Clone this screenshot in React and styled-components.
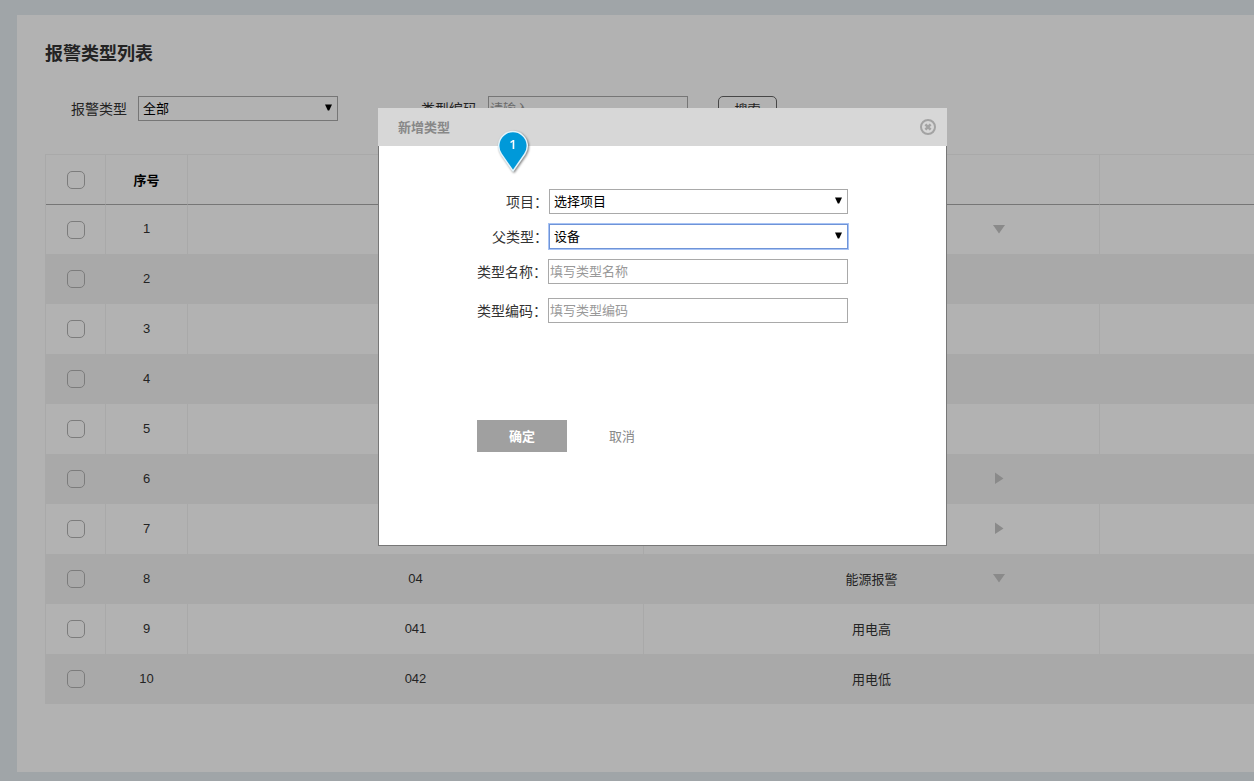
import React, { useState } from "react";
import styled, { createGlobalStyle } from "styled-components";

const palette = {
  page: `#e5ecf1`,
  line: `#f2f2f2`,
  stripe: `#f3f3f3`,
  control: `#a9a9a9`,
  text: `#333`,
  muted: `#888`,
  focus: `#6f94d8`,
  pin: `#0099d9`
};

const GlobalStyle = createGlobalStyle`
  * {
    box-sizing: border-box;
  }
  body {
    margin: 0;
    background: ${palette.page};
    color: ${palette.text};
    font-family: "Liberation Sans", "Noto Sans CJK SC", sans-serif;
    font-size: 13px;
  }
  button, input, select {
    font: inherit;
    margin: 0;
  }
`;

const Page = styled.div`
  padding: 15px 0 9px 17px;
  overflow: hidden;
`;

const Panel = styled.main`
  background: #fff;
  padding: 24px 0 68px 28px;
`;

const Title = styled.h1`
  margin: 0 0 27px;
  font-size: 18px;
  line-height: 30px;
`;

const Filters = styled.form`
  display: flex;
  align-items: flex-start;
  height: 26px;
  margin-bottom: 32px;
  padding-left: 26px;
`;

const FilterLabel = styled.label`
  margin-right: 11px;
  font-size: 14px;
  line-height: 27px;
`;

const SelectBox = styled.div`
  display: grid;
  align-items: center;
  width: ${props => props.$width}px;

  > * {
    grid-area: 1 / 1;
  }
  > svg {
    justify-self: end;
    margin-right: 6px;
    margin-bottom: 2px;
    pointer-events: none;
  }
`;

const SelectInput = styled.select`
  appearance: none;
  width: 100%;
  height: 25px;
  padding: 0 20px 0 4px;
  border: 1px solid ${props => (props.$active ? palette.focus : palette.control)};
  border-radius: 0;
  outline: none;
  background: #fff;
  color: #000;
  box-shadow: ${props => (props.$active ? `0 0 0 1px #a9c4f5` : `none`)};
`;

const TextInput = styled.input`
  width: ${props => props.$width}px;
  height: 25px;
  padding: 0 1px;
  border: 1px solid ${palette.control};
  border-radius: 0;
  outline: none;
  background: #fff;

  &::placeholder {
    color: #999;
    opacity: 1;
  }
`;

const FilterGroup = styled.div`
  display: flex;
  align-items: flex-start;
  margin-right: ${props => props.$gap}px;
`;

const SearchButton = styled.button`
  width: 59px;
  height: 26px;
  padding: 0 0 2px;
  border: 1px solid #666;
  border-radius: 5px;
  background: #fff;
  color: ${palette.text};
`;

const Table = styled.table`
  width: 1510px;
  table-layout: fixed;
  border-collapse: separate;
  border-spacing: 0;
  border-left: 1px solid ${palette.line};

  th, td {
    height: 50px;
    padding: 0;
    text-align: center;
    border-right: 1px solid ${palette.line};
  }
  th {
    border-top: 1px solid ${palette.line};
    color: #000;
  }
  td + td {
    padding-bottom: 2px;
  }
  tbody tr:nth-child(even) {
    background: ${palette.stripe};
  }
  tbody tr:first-child td {
    border-top: 1px solid ${palette.control};
  }
`;

const Check = styled.input`
  appearance: none;
  display: block;
  width: 18px;
  height: 18px;
  margin: 0 auto;
  border: 1px solid #b2b2b2;
  border-radius: 5px;

  &:checked {
    background: #b2b2b2;
  }
`;

const NameCell = styled.div`
  display: grid;
  grid-template-columns: 1fr 242px 1fr;
  align-items: center;

  > span {
    grid-column: 2;
  }
`;

const Toggle = styled.button`
  grid-column: 3;
  justify-self: start;
  display: flex;
  padding: 0;
  border: 0;
  background: none;
`;

const Overlay = styled.div`
  position: fixed;
  inset: 0;
  display: flex;
  justify-content: center;
  align-items: flex-start;
  padding: 108px 0 0 71px;
  background: rgba(0, 0, 0, 0.3);
`;

const Dialog = styled.section`
  position: relative;
  width: 569px;
`;

const DialogHeader = styled.header`
  display: flex;
  justify-content: space-between;
  align-items: center;
  height: 38px;
  padding: 0 10px 0 20px;
  background: #d7d7d7;
`;

const DialogTitle = styled.h2`
  margin: 0;
  padding-bottom: 2px;
  color: ${palette.muted};
  font-size: 13px;
  font-weight: 700;
`;

const CloseButton = styled.button`
  display: flex;
  padding: 0;
  border: 0;
  background: none;
`;

const DialogForm = styled.form`
  padding: 43px 98px 93px;
  border: 1px solid #777;
  border-top: 0;
  background: #fff;
`;

const Field = styled.div`
  display: flex;
  justify-content: flex-end;
  align-items: flex-start;
  width: 371px;
  height: 25px;
  margin-bottom: ${props => props.$gap}px;
`;

const FieldLabel = styled.label`
  flex: 1;
  padding-right: 1px;
  font-size: 14px;
  line-height: 27px;
  text-align: right;
  white-space: nowrap;
`;

const Actions = styled.div`
  display: flex;
  gap: 10px;
`;

const ActionButton = styled.button`
  width: 90px;
  height: 32px;
  padding: 0 0 2px;
  border: 0;
  background: ${props => (props.$primary ? `#a0a0a0` : `none`)};
  color: ${props => (props.$primary ? `#fff` : palette.muted)};
  font-weight: ${props => (props.$primary ? 700 : 400)};
`;

const Pin = styled.svg`
  position: absolute;
  top: 20px;
  left: 117px;
  filter: drop-shadow(1px 1px 1px rgba(0, 0, 0, 0.5));
`;

const rows = [
  { id: 1, arrow: "down" },
  { id: 2 },
  { id: 3 },
  { id: 4 },
  { id: 5 },
  { id: 6, arrow: "right" },
  { id: 7, arrow: "right" },
  { id: 8, code: "04", name: "能源报警", arrow: "down" },
  { id: 9, code: "041", name: "用电高" },
  { id: 10, code: "042", name: "用电低" }
];

const Select = ({ id, width, active, children }) => (
  <SelectBox $width={width}>
    <SelectInput id={id} $active={active}>
      {children}
    </SelectInput>
    <svg width="7" height="7" viewBox="0 0 7 7" aria-hidden="true">
      <path d="M0 0.5H7L4.2 6.5H2.8Z" fill="#000" />
    </svg>
  </SelectBox>
);

const Arrow = ({ direction }) => (
  <svg width="12" height="12" viewBox="0 0 12 12" aria-hidden="true">
    <path
      d={direction === "down" ? "M0 2H12L6 10.5Z" : "M2 0.5L10.5 6.5L2 12Z"}
      fill="#c6c6c6"
    />
  </svg>
);

const TypeTable = () => (
  <Table>
    <colgroup>
      <col style={{ width: 60 }} />
      <col style={{ width: 82 }} />
      <col style={{ width: 456 }} />
      <col style={{ width: 456 }} />
      <col />
    </colgroup>
    <thead>
      <tr>
        <th><Check type="checkbox" aria-label="全选" /></th>
        <th>序号</th>
        <th></th>
        <th></th>
        <th></th>
      </tr>
    </thead>
    <tbody>
      {rows.map(row => (
        <tr key={row.id}>
          <td><Check type="checkbox" aria-label={`选择 ${row.id}`} /></td>
          <td>{row.id}</td>
          <td>{row.code}</td>
          <td>
            <NameCell>
              <span>{row.name}</span>
              {row.arrow ? (
                <Toggle type="button" aria-label="展开">
                  <Arrow direction={row.arrow} />
                </Toggle>
              ) : null}
            </NameCell>
          </td>
          <td></td>
        </tr>
      ))}
    </tbody>
  </Table>
);

const AddTypeDialog = ({ onClose }) => (
  <Overlay>
    <Dialog role="dialog" aria-labelledby="dialog-title">
      <DialogHeader>
        <DialogTitle id="dialog-title">新增类型</DialogTitle>
        <CloseButton type="button" aria-label="关闭" onClick={onClose}>
          <svg width="18" height="18" viewBox="0 0 18 18" fill="none" stroke="#a3a3a3">
            <circle cx="9" cy="9" r="7" strokeWidth="2" />
            <path d="M6.4 6.4L11.6 11.6M11.6 6.4L6.4 11.6" strokeWidth="2.6" />
          </svg>
        </CloseButton>
      </DialogHeader>
      <DialogForm onSubmit={e => e.preventDefault()}>
        <Field $gap={10}>
          <FieldLabel htmlFor="project">项目：</FieldLabel>
          <Select id="project" width={299}>
            <option>选择项目</option>
          </Select>
        </Field>
        <Field $gap={10}>
          <FieldLabel htmlFor="parent">父类型：</FieldLabel>
          <Select id="parent" width={299} active>
            <option>设备</option>
          </Select>
        </Field>
        <Field $gap={14}>
          <FieldLabel htmlFor="name">类型名称：</FieldLabel>
          <TextInput id="name" $width={300} placeholder="填写类型名称" />
        </Field>
        <Field $gap={97}>
          <FieldLabel htmlFor="code">类型编码：</FieldLabel>
          <TextInput id="code" $width={300} placeholder="填写类型编码" />
        </Field>
        <Actions>
          <ActionButton $primary type="submit">确定</ActionButton>
          <ActionButton type="button" onClick={onClose}>取消</ActionButton>
        </Actions>
      </DialogForm>
      <Pin width="36" height="46" viewBox="0 0 36 46">
        <path
          d="M18 43L6.2 26A14.3 14.3 0 1 1 29.8 26Z"
          fill={palette.pin}
          stroke="#e4f4fb"
          strokeWidth="1.5"
          strokeLinejoin="round"
        />
        <text
          x="18"
          y="21"
          fill="#fff"
          fontFamily="Open Sans, sans-serif"
          fontSize="13"
          fontWeight="600"
          textAnchor="middle"
        >
          1
        </text>
      </Pin>
    </Dialog>
  </Overlay>
);

const App = () => {
  const [isOpen, setIsOpen] = useState(true);

  return (
    <React.Fragment>
      <GlobalStyle />
      <Page>
        <Panel>
          <Title>报警类型列表</Title>
          <Filters onSubmit={e => e.preventDefault()}>
            <FilterGroup $gap={83}>
              <FilterLabel htmlFor="filter-type">报警类型</FilterLabel>
              <Select id="filter-type" width={200}>
                <option>全部</option>
              </Select>
            </FilterGroup>
            <FilterGroup $gap={30}>
              <FilterLabel htmlFor="filter-code">类型编码</FilterLabel>
              <TextInput id="filter-code" $width={200} placeholder="请输入" />
            </FilterGroup>
            <SearchButton type="submit">搜索</SearchButton>
          </Filters>
          <TypeTable />
        </Panel>
      </Page>
      {isOpen ? <AddTypeDialog onClose={() => setIsOpen(false)} /> : null}
    </React.Fragment>
  );
};

export default App;
